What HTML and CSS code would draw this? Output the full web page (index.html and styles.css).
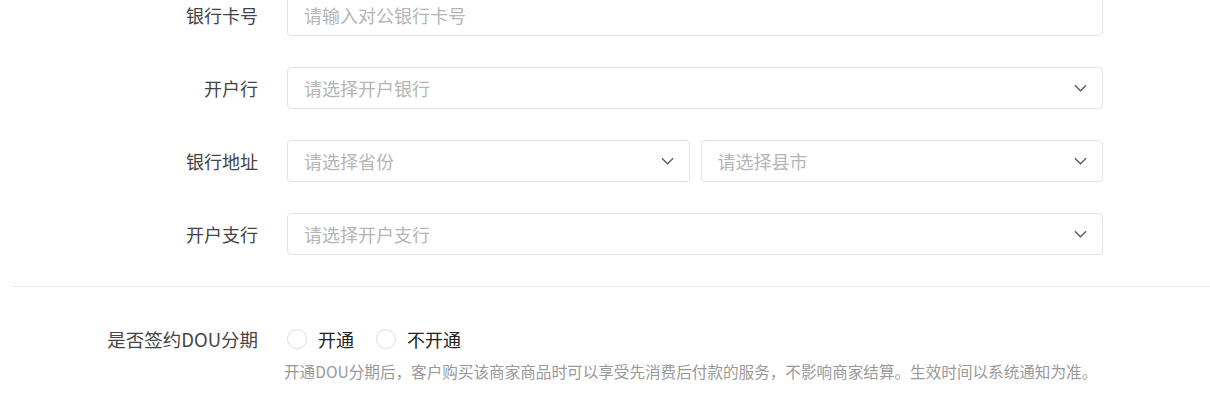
FILE: index.html
```html
<!DOCTYPE html>
<html lang="zh-CN">
<head>
    <meta charset="UTF-8">
    <meta name="viewport" content="width=device-width, initial-scale=1.0">
    <title>对公账户</title>
    <link rel="stylesheet" href="styles.css">
</head>
<body>
    <div class="form">
        <div class="row">
            <label class="label">银行卡号</label>
            <div class="control">
                <div class="field"><span class="ph">请输入对公银行卡号</span></div>
            </div>
        </div>
        <div class="row">
            <label class="label">开户行</label>
            <div class="control">
                <div class="field select"><span class="ph">请选择开户银行</span>
                    <svg class="arrow" viewBox="0 0 14 8"><path d="M1 1l6 6 6-6"/></svg>
                </div>
            </div>
        </div>
        <div class="row">
            <label class="label">银行地址</label>
            <div class="control split">
                <div class="field select"><span class="ph">请选择省份</span>
                    <svg class="arrow" viewBox="0 0 14 8"><path d="M1 1l6 6 6-6"/></svg>
                </div>
                <div class="field select"><span class="ph">请选择县市</span>
                    <svg class="arrow" viewBox="0 0 14 8"><path d="M1 1l6 6 6-6"/></svg>
                </div>
            </div>
        </div>
        <div class="row">
            <label class="label">开户支行</label>
            <div class="control">
                <div class="field select"><span class="ph">请选择开户支行</span>
                    <svg class="arrow" viewBox="0 0 14 8"><path d="M1 1l6 6 6-6"/></svg>
                </div>
            </div>
        </div>
    </div>

    <div class="divider"></div>

    <div class="form dou">
        <div class="row radio-row">
            <label class="label">是否签约DOU分期</label>
            <div class="radios">
                <span class="radio"><i class="dot"></i>开通</span>
                <span class="radio"><i class="dot"></i>不开通</span>
            </div>
        </div>
        <p class="help">开通DOU分期后，客户购买该商家商品时可以享受先消费后付款的服务，不影响商家结算。生效时间以系统通知为准。</p>
    </div>
</body>
</html>
```

FILE: styles.css
```css
body {
    margin: 0;
    background: #fff;
    font-family: "Noto Sans CJK SC", "Microsoft YaHei", sans-serif;
    color: #333;
    overflow: hidden;
}
.form {
    display: flex;
    flex-direction: column;
    gap: 31px;
    margin-top: -6px;
}
.row {
    display: flex;
    align-items: center;
}
.label {
    width: 287px;
    text-align: right;
    font-size: 18px;
    color: #444;
    padding-right: 29px;
    box-sizing: border-box;
}
.control {
    width: 816px;
}
.split {
    display: grid;
    grid-template-columns: 1fr 1fr;
    gap: 11px;
}
.field {
    height: 42px;
    box-sizing: border-box;
    border: 1px solid #e3e3e3;
    border-radius: 4px;
    display: flex;
    align-items: center;
    padding: 0 16px;
    font-size: 18px;
}
.ph {
    color: #b5b5b5;
    flex: 1;
}
.arrow {
    width: 13px;
    height: 8px;
    margin-right: -1px;
    fill: none;
    stroke: #555;
    stroke-width: 1.3;
}
.divider {
    height: 1px;
    background: #ebebeb;
    margin: 31px 0 0 11px;
}
.dou {
    margin-top: 38px;
    gap: 7px;
}
.radio-row {
    height: 28px;
}
.radio-row .label {
    font-size: 18.5px;
}
.radios {
    display: flex;
    gap: 22px;
}
.radio {
    display: flex;
    align-items: center;
    font-size: 18px;
    color: #222;
}
.dot {
    width: 20px;
    height: 20px;
    border: 1px solid #dcdcdc;
    border-radius: 50%;
    margin-right: 11px;
    box-sizing: border-box;
}
.help {
    margin: 0 0 0 284px;
    font-size: 15.6px;
    color: #999;
}
```
